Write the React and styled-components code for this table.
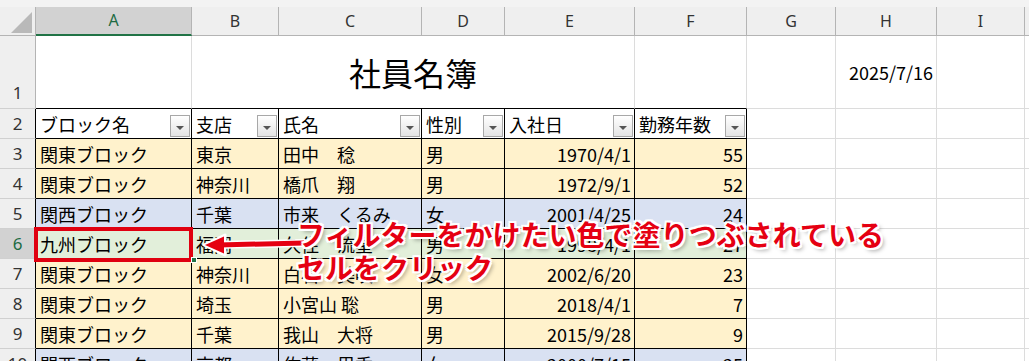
import React from 'react'
import styled, { createGlobalStyle } from 'styled-components'

const GlobalStyle = createGlobalStyle`
  html, body {
    margin: 0;
    padding: 0;
    background: #fff;
    overflow: hidden;
  }
  body {
    font-family: "Noto Sans CJK JP", "Noto Sans", sans-serif;
  }
`;

const GRID = '#dcdcdc';
const HEAD_LINE = '#b4b4b4';
const FILLS = { yellow: '#fff2cc', blue: '#d9e1f2', green: '#e2efda' };

const Page = styled.div`
  position: relative;
  width: 1029px;
  height: 361px;
  overflow: hidden;
`;

const TopStrip = styled.div`
  height: 7px;
  background: #f3f3f3;
`;

const Sheet = styled.div`
  display: grid;
  grid-template-columns: 36px 156px 87px 143px 83px 130px 112px 89px 101px 88px 1fr;
  grid-template-rows: 29px 73px repeat(9, 30px);
`;

const Corner = styled.div`
  box-sizing: border-box;
  background: #efefef;
  border-right: 1px solid ${HEAD_LINE};
  border-bottom: 1px solid ${HEAD_LINE};
  display: flex;
  align-items: flex-end;
  justify-content: flex-end;
  padding: 0 3px 2px 0;
`;

const CornerMark = styled.div`
  width: 0;
  height: 0;
  border-left: 21px solid transparent;
  border-bottom: 21px solid #b9b9b9;
`;

const ColHead = styled.div`
  box-sizing: border-box;
  display: flex;
  align-items: center;
  justify-content: center;
  background: ${(p) => (p.$selected ? '#d2d2d2' : '#efefef')};
  color: ${(p) => (p.$selected ? '#1d6b43' : '#333')};
  border-right: 1px solid ${HEAD_LINE};
  border-bottom: ${(p) => (p.$selected ? '2px solid #217346' : `1px solid ${HEAD_LINE}`)};
  font-family: "Noto Sans", "Liberation Sans", sans-serif;
  font-size: 16px;
  padding-bottom: 1px;
`;

const RowHead = styled.div`
  box-sizing: border-box;
  display: flex;
  align-items: ${(p) => (p.$tall ? 'flex-end' : 'center')};
  justify-content: center;
  padding-bottom: ${(p) => (p.$tall ? '4px' : '0')};
  background: ${(p) => (p.$selected ? '#d2d2d2' : '#efefef')};
  color: ${(p) => (p.$selected ? '#1d6b43' : '#333')};
  border-right: 1px solid ${(p) => (p.$edge ? '#000' : HEAD_LINE)};
  border-bottom: 1px solid #d0d0d0;
  font-family: "Noto Sans", "Liberation Sans", sans-serif;
  font-size: 17px;
`;

const Cell = styled.div`
  box-sizing: border-box;
  display: flex;
  align-items: center;
  justify-content: ${(p) => (p.$align === 'right' ? 'flex-end' : p.$align === 'center' ? 'center' : 'flex-start')};
  padding: 0 3px 0 4px;
  background: ${(p) => p.$bg || '#fff'};
  border-right: 1px solid ${(p) => p.$r || GRID};
  border-bottom: 1px solid ${(p) => p.$b || GRID};
  font-size: 18px;
  color: #000;
  white-space: pre;
  overflow: hidden;
  grid-column: ${(p) => (p.$span ? `span ${p.$span}` : 'auto')};
`;

const Title = styled(Cell)`
  font-size: 32px;
  padding: 0;
`;

const HeadCell = styled(Cell)`
  justify-content: space-between;
  padding: 0 1px 0 4px;
`;

const Label = styled.span`
  flex: 1;
`;

const FilterButton = styled.div`
  box-sizing: border-box;
  align-self: flex-end;
  margin-bottom: 1px;
  width: 20px;
  height: 22px;
  border: 1px solid #a8a8a8;
  background: linear-gradient(#ffffff, #e4e4e4);
  display: flex;
  align-items: center;
  justify-content: center;

  &::after {
    content: '';
    width: 0;
    height: 0;
    margin-top: 3px;
    border-left: 4px solid transparent;
    border-right: 4px solid transparent;
    border-top: 4px solid #555;
  }
`;

const RedBox = styled.div`
  position: absolute;
  left: 34px;
  top: 227px;
  width: 159px;
  height: 35px;
  box-sizing: border-box;
  border: 4px solid #e00010;
`;

const FillHandle = styled.div`
  position: absolute;
  left: 191px;
  top: 257px;
  width: 4px;
  height: 4px;
  background: #217346;
  border: 1px solid #fff;
`;

const ArrowSvg = styled.svg`
  position: absolute;
  left: 196px;
  top: 232px;
  overflow: visible;
`;

const Callout = styled.div`
  position: absolute;
  left: 297px;
  top: 218px;
  font-family: "Noto Sans CJK JP", sans-serif;
  font-weight: 700;
  font-size: 28px;
  line-height: 33px;
  color: #e50012;
  white-space: pre;
  text-shadow:
    2px 0 0 #fff, -2px 0 0 #fff, 0 2px 0 #fff, 0 -2px 0 #fff,
    2px 2px 0 #fff, -2px -2px 0 #fff, 2px -2px 0 #fff, -2px 2px 0 #fff,
    3px 3px 4px rgba(0, 0, 0, 0.35);
`;

const letters = ['A', 'B', 'C', 'D', 'E', 'F', 'G', 'H', 'I', ''];
const headers = ['ブロック名', '支店', '氏名', '性別', '入社日', '勤務年数'];
const rows = [
  { n: 3, fill: 'yellow', v: ['関東ブロック', '東京', '田中　稔', '男', '1970/4/1', '55'] },
  { n: 4, fill: 'yellow', v: ['関東ブロック', '神奈川', '橋爪　翔', '男', '1972/9/1', '52'] },
  { n: 5, fill: 'blue', v: ['関西ブロック', '千葉', '市来　くるみ', '女', '2001/4/25', '24'] },
  { n: 6, fill: 'green', v: ['九州ブロック', '福岡', '久住　流星', '男', '1998/4/1', '27'] },
  { n: 7, fill: 'yellow', v: ['関東ブロック', '神奈川', '白石　美咲', '女', '2002/6/20', '23'] },
  { n: 8, fill: 'yellow', v: ['関東ブロック', '埼玉', '小宮山 聡', '男', '2018/4/1', '7'] },
  { n: 9, fill: 'yellow', v: ['関東ブロック', '千葉', '我山　大将', '男', '2015/9/28', '9'] },
  { n: 10, fill: 'blue', v: ['関西ブロック', '京都', '佐藤　里香', '女', '2000/7/15', '25'] },
];

const blanks = (key) =>
  [0, 1, 2, 3].map((i) => <Cell key={`${key}-${i}`} />);

const App = () => {
  return (
    <Page>
      <GlobalStyle />
      <TopStrip />
      <Sheet>
        <Corner>
          <CornerMark />
        </Corner>
        {letters.map((l) => (
          <ColHead key={l || 'J'} $selected={l === 'A'}>{l}</ColHead>
        ))}

        {/* row 1 */}
        <RowHead $tall>1</RowHead>
        <Cell $b="#000" />
        <Title $span={4} $align="center" $b="#000">社員名簿</Title>
        <Cell $b="#000" />
        <Cell />
        <Cell $align="right">2025/7/16</Cell>
        <Cell />
        <Cell />

        {/* row 2: table header */}
        <RowHead $edge>2</RowHead>
        {headers.map((h) => (
          <HeadCell key={h} $r="#000" $b="#000">
            <Label>{h}</Label>
            <FilterButton />
          </HeadCell>
        ))}
        {blanks('h')}

        {rows.map((row) => (
          <React.Fragment key={row.n}>
            <RowHead $edge $selected={row.n === 6}>{row.n}</RowHead>
            {row.v.map((val, i) => (
              <Cell
                key={i}
                $bg={FILLS[row.fill]}
                $r="#000"
                $b="#000"
                $align={i >= 4 ? 'right' : 'left'}
              >
                {val}
              </Cell>
            ))}
            {blanks(row.n)}
          </React.Fragment>
        ))}
      </Sheet>

      <RedBox />
      <FillHandle />
      <ArrowSvg width="110" height="26" viewBox="0 0 110 26">
        <path d="M20 13 L108 11" stroke="#fff" strokeWidth="8" strokeLinecap="round" />
        <polygon points="8,13 29,3 29,23" fill="#fff" stroke="#fff" strokeWidth="3" strokeLinejoin="round" />
        <path d="M22 13 L108 11" stroke="#e50012" strokeWidth="5" />
        <polygon points="9,13 28,4.5 28,21.5" fill="#e50012" />
      </ArrowSvg>
      <Callout>
        {'フィルターをかけたい色で塗りつぶされている\nセルをクリック'}
      </Callout>
    </Page>
  )
};

export default App
